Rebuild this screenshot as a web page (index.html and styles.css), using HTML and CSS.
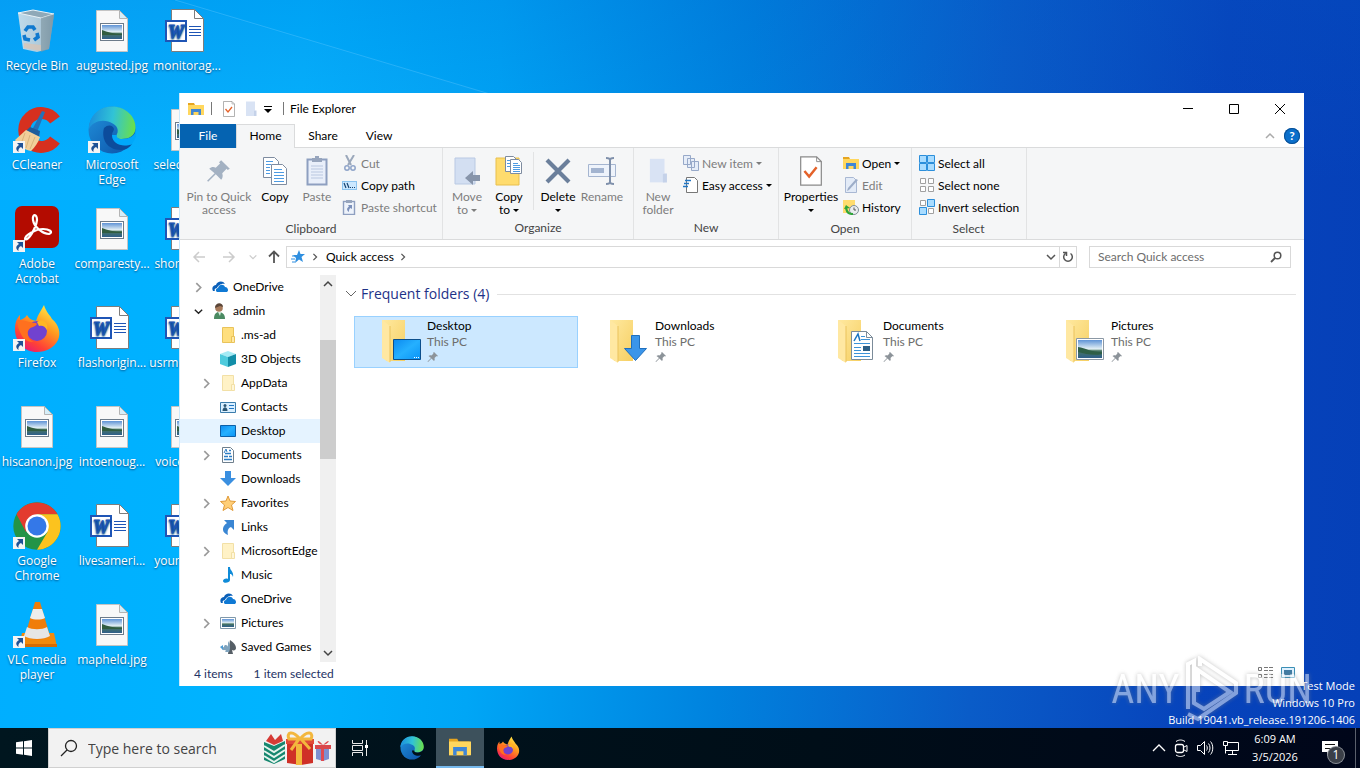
FILE: index.html
```html
<!DOCTYPE html>
<html lang="en">
<head>
<meta charset="utf-8">
<title>File Explorer</title>
<link rel="stylesheet" href="styles.css">
</head>
<body>

<!-- shared icons -->
<svg class="defs" width="0" height="0" aria-hidden="true">
  <defs>
    <linearGradient id="gSky" x1="0" y1="0" x2="0" y2="1"><stop offset="0" stop-color="#5f93d6"/><stop offset=".5" stop-color="#e4f1f5"/><stop offset=".6" stop-color="#47745f"/><stop offset="1" stop-color="#2f5f8c"/></linearGradient>
    <linearGradient id="gFolder" x1="0" y1="0" x2="1" y2="1"><stop offset="0" stop-color="#ffe9a0"/><stop offset="1" stop-color="#f6cf62"/></linearGradient>
    <linearGradient id="gEdge1" x1="0" y1=".4" x2="1" y2=".5"><stop offset="0" stop-color="#1b8fdc"/><stop offset=".5" stop-color="#31c3d6"/><stop offset="1" stop-color="#6ae04a"/></linearGradient>
    <linearGradient id="gEdge2" x1="0" y1="0" x2="1" y2="1"><stop offset="0" stop-color="#2193dd"/><stop offset="1" stop-color="#0b4fa5"/></linearGradient>
    <linearGradient id="gFox" x1=".8" y1="0" x2=".2" y2="1"><stop offset="0" stop-color="#fff04a"/><stop offset=".4" stop-color="#ff9a1f"/><stop offset=".75" stop-color="#ff4136"/><stop offset="1" stop-color="#e3157f"/></linearGradient>
    <linearGradient id="gScreen" x1="0" y1="0" x2="1" y2="1"><stop offset="0" stop-color="#0b8af0"/><stop offset=".5" stop-color="#25b0ff"/><stop offset="1" stop-color="#0a93f5"/></linearGradient>
    <linearGradient id="gBin" x1="0" y1="0" x2="1" y2="0"><stop offset="0" stop-color="#d3e1ea"/><stop offset=".6" stop-color="#c2cfd8"/><stop offset="1" stop-color="#8fa3b0"/></linearGradient>
  </defs>

  <symbol id="arrow" viewBox="0 0 12 12"><rect width="12" height="12" fill="#f4f4f4"/><path d="M4 2h6v6L8 6C6 7 5 8.500 5.500 11 2 8.500 3 5.500 6 4z" fill="#1f5296"/></symbol>
  <symbol id="jpg" viewBox="0 0 48 48"><path d="M8.500 3.500h23l8 8v33h-31z" fill="#f8f8f8" stroke="#c4c4c4"/><path d="M31.500 3.500v8h8z" fill="#d6eef8" stroke="#b4b4b4"/><rect x="12.500" y="16.500" width="23" height="17" fill="#fff" stroke="#6d7b8a"/><rect x="14" y="18" width="20" height="14" fill="url(#gSky)"/><path d="M14 23c5 2 12 4 20 4v1H14z" fill="#305c40"/></symbol>
  <symbol id="doc" viewBox="0 0 48 48"><path d="M8.500 2.500h23l9 9v33h-32z" fill="#fff" stroke="#7d7d7d"/><path d="M31.500 2.500v9h9z" fill="#fff" stroke="#7d7d7d"/><path d="M26 19.500h12M26 22.500h12M26 25.500h12M26 28.500h12" stroke="#1f55b5"/><rect x="3" y="14" width="20" height="20" fill="#fff" stroke="#1f55b5" stroke-width="2"/><text x="13" y="30.500" text-anchor="middle" font-family="Liberation Serif, serif" font-weight="bold" font-style="italic" font-size="18" fill="#1f55b5" stroke="#1f55b5">W</text></symbol>
  <symbol id="bin" viewBox="0 0 48 48"><path d="M5 6 41 8 36 42 24 45 10 42z" fill="url(#gBin)" opacity=".9"/><path d="M5 6 20 3 41 7 28 11z" fill="#8fa9b8" stroke="#e9f2f7"/><path d="M28 11 41 7 36 42 28 45z" fill="#7f949f" opacity=".6"/><path d="M11 36l17 2v6l-17-3z" fill="#ddc3b0" opacity=".7"/><g fill="none" stroke="#0f79cf" stroke-width="3.600"><path d="M12 24l3-4 5 0 2 3"/><path d="M24 26l1 4-4 3"/><path d="M17 33l-5-1-1-4"/></g></symbol>
  <symbol id="ccleaner" viewBox="0 0 48 48"><path d="M42 14A17 17 0 1 0 42 34" fill="none" stroke="#d6301f" stroke-width="12"/><path d="M29 5l3 1-8 20-5-2z" fill="#2472b8"/><path d="M17 21l10 4-1 6-14-5z" fill="#1e5d9c"/><path d="M13 24l14 7c-2 6-5 10-9 14C12 44 6 40 2 34z" fill="#f1cf9a"/><path d="M12 27 8 38M17 29l-4 13M22 31l-5 12" stroke="#d9b47c"/></symbol>
  <symbol id="edge" viewBox="0 0 48 48"><circle cx="24" cy="24" r="23.500" fill="url(#gEdge2)"/><path d="M1 19C4 6 14 .5 24 .5 38 .5 48 11 47.500 22c0 8-7 11-14 11-4 0-6-2-5-4 2-3 2-8-3-11C16 12 5 15 1 23z" fill="url(#gEdge1)"/><path d="M16 22c-3 11 3 22 17 22 5 0 9-3 11-6-9 4-20 0-20-9 0-3 2-4 2-6-1-4-6-5-10-1z" fill="#0c4c9c"/><path d="M24 29c0 9 11 13 20 9l4-7 0-8c0 7-7 10-14 10-4 0-6-2-5-4z" fill="#00a8fa"/></symbol>
  <symbol id="edgebar" viewBox="0 0 48 48"><circle cx="24" cy="24" r="23" fill="url(#gEdge2)"/><path d="M1 19C4 6 14 .5 24 .5 38 .5 48 11 47.500 22c0 8-7 11-14 11-4 0-6-2-5-4 2-3 2-8-3-11C16 12 5 15 1 23z" fill="url(#gEdge1)"/><path d="M24 29c0 9 11 13 20 9l4-7 0-8c0 7-7 10-14 10-4 0-6-2-5-4z" fill="#001019"/></symbol>
  <symbol id="acrobat" viewBox="0 0 48 48"><rect x="2" y="1" width="44" height="42" rx="7" fill="#b30b00"/><path d="M12 34c3 3 11-11 12-19 0-7-5-6-4 0 1 7 10 14 16 14 5-2 0-5-6-5-7 0-18 6-18 10z" fill="none" stroke="#fff" stroke-width="2.200"/></symbol>
  <symbol id="firefox" viewBox="0 0 48 48"><path d="M2 25C2 17 5 13 7 11v5c3-1 5-2 7-5 2 4 5 5 9 6 2-7 6-12 8-16 2 7 6 10 8 14 7 6 9 14 6 21-4 8-12 12-21 12C11 48 2 38 2 25z" fill="url(#gFox)"/><circle cx="24" cy="27" r="10" fill="#7142cf"/><path d="M5 16c8 0 12 3 18 3 2 1 0 3-3 4-4 1-6 4-5 8 0 3 3 6 6 7-7 0-11-3-13-8-2-4-4-9-3-14z" fill="#ff701f"/><path d="M24 18c6-4 12 1 10 8-2-4-5-5-8-4z" fill="#ffb622"/></symbol>
  <symbol id="chrome" viewBox="0 0 48 48"><circle cx="24" cy="24" r="23.700" fill="#239447"/><path d="M3.500 12.200A23.700 23.700 0 0 1 44.500 12.200H24L13 30z" fill="#e33b2e"/><path d="M44.500 12.200A23.700 23.700 0 0 1 24 47.700L34.500 30 24 12.200z" fill="#fcc31e"/><circle cx="24" cy="24" r="11.800" fill="#fff"/><circle cx="24" cy="24" r="9.500" fill="#3478e8"/></symbol>
  <symbol id="vlc" viewBox="0 0 48 48"><path d="M9 32h32l3 14H6z" fill="#f28a0c"/><path d="M6 43h38v3H6z" fill="#d76c03"/><path d="M22 1h5l10 34c-5 5-20 5-25 0z" fill="#f07d0a"/><path d="M20 8h9l3 9c-4 2-11 2-15 0z" fill="#ededed"/><path d="M14 26c5 3 15 3 20 0l3 9c-6 4-20 4-26 0z" fill="#e6e6e6"/></symbol>

  <symbol id="explorer" viewBox="0 0 16 16"><path d="M0 2h6l1 2h8v10H0z" fill="#e6a520"/><path d="M0 4h16v10H0z" fill="#ffd75e"/><path d="M3 8h10v6h-2.500v-3h-5v3H3z" fill="#3f86d6"/></symbol>
  <symbol id="check" viewBox="0 0 24 32"><path d="M1 1h17l5 5v25H1z" fill="#fff" stroke="#8a8a8a" stroke-width="1.300"/><path d="M18 1v5h5" fill="none" stroke="#8a8a8a"/><path d="M5 16l5 6L18 12" fill="none" stroke="#e4622a" stroke-width="2.600"/></symbol>
  <symbol id="palefolder" viewBox="0 0 24 32"><path d="M2 1h18v29H2z" fill="#d9e3f4"/><path d="M20 19h3v11h-5V20z" fill="#c5d2e9"/></symbol>
  <symbol id="pin" viewBox="0 0 24 24"><path d="M14 2l8 8-2 1-1-1-4 4c1 3 0 5-1 6l-5-5-7 7-1-1 7-7-5-4c2-2 4-2 6-1l4-4-1-1z" fill="currentColor"/></symbol>
  <symbol id="copy" viewBox="0 0 26 30"><g fill="#fff" stroke="#7e8ca0"><path d="M1.500 1.500h11l4 4v16h-15z"/><path d="M9.500 8.500h11l4 4v16h-15z"/></g><path d="M4 5.500h7M4 8.500h5M4 11.500h4M4 14.500h4M4 17.500h4M12 13.500h8M12 16.500h10M12 19.500h10M12 22.500h10M12 25.500h10" stroke="#4d9be3"/></symbol>
  <symbol id="paste" viewBox="0 0 22 30"><rect x="1.500" y="3.500" width="19" height="25" fill="#e9effa" stroke="#8e9fc0" stroke-width="2"/><path d="M6 2h3V0h4v2h3v4H6z" fill="#97a5bd"/><path d="M5 10h12M5 13h12M5 16h12M5 19h12M5 22h12" stroke="#b9c7e0"/></symbol>
  <symbol id="cut" viewBox="0 0 16 16"><path d="M4 0l5 10M12 0 6 10" stroke="#9ba8bb" stroke-width="2"/><circle cx="5" cy="13" r="2.200" fill="none" stroke="#8fa4c9" stroke-width="1.500"/><circle cx="11" cy="13" r="2.200" fill="none" stroke="#8fa4c9" stroke-width="1.500"/></symbol>
  <symbol id="path" viewBox="0 0 16 16"><rect x=".5" y="4.500" width="14" height="8" fill="#cce8ff" stroke="#8bc4f0"/><path d="M2 6l2 5M5 6l2 5M8 10.500h1M10 10.500h1M12 10.500h1" stroke="#17436f" stroke-width="1.200"/></symbol>
  <symbol id="pastesc" viewBox="0 0 16 16"><rect x="1.500" y="2.500" width="11" height="13" fill="#eef3fb" stroke="#8e9fc0" stroke-width="1.400"/><path d="M4 1h6v3H4z" fill="#97a5bd"/><path d="M6 6h4v4L8.500 9C7 10 7 11 7 13 4 11 5 9 7 7.500z" fill="#7b90bb"/></symbol>
  <symbol id="moveto" viewBox="0 0 26 30"><path d="M1 2h20v26H1z" fill="#d3dff2" stroke="#b9c9e3"/><path d="M11 22l8-7v4h7v6h-7v4z" fill="#8795ab"/></symbol>
  <symbol id="copyto" viewBox="0 0 26 30"><path d="M0 2h23v27H0z" fill="#ffdc6e" stroke="#e8bf4c"/><g fill="#fff" stroke="#7e8ca0"><path d="M9.500.5h8l3 3v12h-11z"/><path d="M14.500 3.500h8l3 3v11h-11z"/></g><path d="M11 4.500h3M11 7.500h3M11 10.500h3M17 7.500h5M17 9.500h7M17 11.500h7M17 13.500h7M17 15.500h7" stroke="#4d9be3"/></symbol>
  <symbol id="delete" viewBox="0 0 26 26"><path d="M2 2l22 22M24 2 2 24" stroke="#6b7f9b" stroke-width="4.200"/></symbol>
  <symbol id="rename" viewBox="0 0 28 28"><path d="M.500 7.500h27v12H.500z" fill="#eef3fb" stroke="#a5b5d0"/><path d="M3 11h13v5H3z" fill="#a3b4d0"/><path d="M18 1c3 0 4 1 4 2 0-1 1-2 4-2M22 2v24M18 27c3 0 4-1 4-2 0 1 1 2 4 2" fill="none" stroke="#7f90ab" stroke-width="2"/></symbol>
  <symbol id="newitem" viewBox="0 0 16 16"><g fill="#e6edf8" stroke="#97a9c9"><path d="M.500.500h7v9h-7zM4.500 3.500h7v9h-7zM8.500 6.500h7v9h-7z"/></g></symbol>
  <symbol id="easy" viewBox="0 0 16 16"><path d="M3.500.500h8l3 3v12h-11z" fill="#fff" stroke="#777"/><path d="M2 3.500h6M1 6.500h5M0 9.500h5" stroke="#2277c5" stroke-width="1.500"/></symbol>
  <symbol id="edit" viewBox="0 0 16 16"><path d="M2.500.500h8l3 3v12h-11z" fill="#e3ebf7" stroke="#a9b8d3"/><path d="M15 3 6 13l-2 1 1-3 8-9z" fill="#9dadc8"/></symbol>
  <symbol id="history" viewBox="0 0 16 16"><path d="M0 1h12v13H0z" fill="#ffdc6e"/><circle cx="11" cy="11" r="4.500" fill="#e9ecef" stroke="#7f8d97"/><path d="M11 8.500V11h2" fill="none" stroke="#555"/><path d="M3 9c1 5 3 6 7 6" fill="none" stroke="#2fa53a" stroke-width="2.200"/><path d="M1 10l2-4 4 3z" fill="#2fa53a"/></symbol>
  <symbol id="selall" viewBox="0 0 16 16"><path d="M.500.500h7v7h-7zM8.500.500h7v7h-7zM.500 8.500h7v7h-7zM8.500 8.500h7v7h-7z" fill="#a9dcff" stroke="#2c8fdb"/></symbol>
  <symbol id="selnone" viewBox="0 0 16 16"><path d="M1.500 1.500h5v5h-5zM9.500 1.500h5v5h-5zM1.500 9.500h5v5h-5zM9.500 9.500h5v5h-5z" fill="#fff" stroke="#a0a0a0"/></symbol>
  <symbol id="selinv" viewBox="0 0 16 16"><path d="M1.500 1.500h5v5h-5zM9.500 9.500h5v5h-5z" fill="#fff" stroke="#a0a0a0"/><path d="M8.500.500h7v7h-7zM.500 8.500h7v7h-7z" fill="#a9dcff" stroke="#2c8fdb"/></symbol>
  <symbol id="chev" viewBox="0 0 10 10"><path d="M3 1l4 4-4 4" fill="none" stroke="currentColor" stroke-width="1.500"/></symbol>
  <symbol id="down" viewBox="0 0 12 12"><path d="M2 4l4 4 4-4" fill="none" stroke="currentColor" stroke-width="1.500"/></symbol>
  <symbol id="back" viewBox="0 0 14 14"><path d="M7 2 2 7l5 5M2 7h11" fill="none" stroke="currentColor" stroke-width="1.500"/></symbol>
  <symbol id="star" viewBox="0 0 16 16"><path d="M9 1l1.500 4H15l-3.500 3 1.500 5-4-2.500L5 14l1-5-3-3h4z" fill="#2f8fe0"/><path d="M2 7h3M1 10h4M2 13h3" stroke="#2f8fe0"/></symbol>

  <symbol id="cloud" viewBox="0 0 16 16"><path d="M1 12C-1 8 2 6 4 6c1-4 7-5 9-1-4-1-7 2-8 4-2 0-3 2-2 3z" fill="#0a5fb8"/><path d="M5 13c-2-1-1-4 1-4 1-4 6-4 7-1 3 0 4 4 2 5z" fill="#0f79d4"/></symbol>
  <symbol id="user" viewBox="0 0 16 16"><path d="M2 16c0-5 2-7 5-7s6 2 6 7z" fill="#4b8a62"/><path d="M6 9h3l-1 4z" fill="#d8efe2"/><circle cx="7" cy="5" r="3.800" fill="#a77a5b"/><path d="M3 5c0-6 8-6 8-1L8 3z" fill="#5b4638"/></symbol>
  <symbol id="folder" viewBox="0 0 16 16"><path d="M2.500.500h11v15h-11z" fill="#ffdf7e" stroke="#e9c35a"/><path d="M11.500 9.500h3v6h-3z" fill="#ffe9a6" stroke="#e9c35a"/></symbol>
  <symbol id="folderdim" viewBox="0 0 16 16"><path d="M2.500.500h11v15h-11z" fill="#fff2c6" stroke="#f2e0a6"/><path d="M11.500 9.500h3v6h-3z" fill="#fff6d8" stroke="#f2e0a6"/></symbol>
  <symbol id="cube" viewBox="0 0 16 16"><path d="M0 3 8 0l8 3-8 3z" fill="#a5ebf5"/><path d="M0 3l8 3v10l-8-3z" fill="#4ecbdd"/><path d="M16 3 8 6v10l8-3z" fill="#128ea8"/></symbol>
  <symbol id="contact" viewBox="0 0 16 16"><path d="M.500 3.500h15v10H.500z" fill="#d9efff" stroke="#3b7dac"/><circle cx="5" cy="6.500" r="1.500" fill="#2b5673"/><path d="M2.500 12c0-5 5-5 5 0z" fill="#2b5673"/><path d="M9 6.500h5M9 9.500h5" stroke="#2277c5"/></symbol>
  <symbol id="screen" viewBox="0 0 16 16"><path d="M.500 2.500h15v11H.500z" fill="url(#gScreen)" stroke="#0b5fa8"/></symbol>
  <symbol id="docs" viewBox="0 0 16 16"><path d="M2.500.500h8l3 3v12h-11z" fill="#fff" stroke="#6e7f8d"/><path d="M9 3.500h2M5 6.500h6M4 9.500h4M9 9.500h3M4 12.500h8" stroke="#2b7cc4" stroke-width="1.500"/><path d="M4 6l2-4 1 3" fill="none" stroke="#2b7cc4"/></symbol>
  <symbol id="dl" viewBox="0 0 16 16"><path d="M5 0h6v7h5l-8 8-8-8h5z" fill="#3a8fe0"/></symbol>
  <symbol id="fav" viewBox="0 0 16 16"><path d="M8 1l2 5 5.500.500-4 3.500 1.500 5.500L8 12.500 3 15.500 4.500 10 .500 6.500 6 6z" fill="#ffcf78" stroke="#e09a3a"/></symbol>
  <symbol id="link" viewBox="0 0 16 16"><path d="M4 1h10v10l-3-3c-3 1-4 4-3 8-6-2-7-8-1-12z" fill="#3a86d3"/></symbol>
  <symbol id="music" viewBox="0 0 16 16"><path d="M8 0h2c0 4 4 4 3 10-1-3-2-3-3-3v6c0 3-7 4-7 1 0-2 3-3 5-2z" fill="#0f8bd8"/></symbol>
  <symbol id="pics" viewBox="0 0 16 16"><path d="M.500 2.500h15v11H.500z" fill="#fff" stroke="#7f98aa"/><path d="M2 4h12v8H2z" fill="url(#gSky)"/></symbol>
  <symbol id="games" viewBox="0 0 16 16"><path d="M10 1c4 3 6 5 6 8 0 2-2 3-4 2l1 4H8z" fill="#555e66"/><path d="M8 2c2 3 3 7 1 11H5c1-1 1-2 0-2-3 1-4-3-1-3 0-3 4-2 4 0z" fill="#7fa3bd"/><path d="M0 8l3-2v5z" fill="#4f9bd3"/></symbol>
  <symbol id="bigfolder" viewBox="0 0 48 48"><path d="M6 2h23v41H10z" fill="url(#gFolder)"/><path d="M6 2l8 6v37l-8-5z" fill="#ffe8a2"/><path d="M14 8v36" stroke="#eac35d"/></symbol>
</svg>

<div class="desktop">
  <svg class="beams" viewBox="0 0 1360 728" preserveAspectRatio="none" aria-hidden="true">
    <path d="M170 0 500 97 700 200H0V0z" fill="#fff" opacity=".02"/>
    <path d="M175 0 500 97" stroke="#7fd0ff" opacity=".3"/>
  </svg>

  <div class="icons">
    <a class="item" href="#"><svg><use href="#bin"/></svg><span>Recycle Bin</span></a>
    <a class="item" href="#"><svg><use href="#ccleaner"/></svg><svg class="sc"><use href="#arrow"/></svg><span>CCleaner</span></a>
    <a class="item" href="#"><svg><use href="#acrobat"/></svg><svg class="sc"><use href="#arrow"/></svg><span>Adobe Acrobat</span></a>
    <a class="item" href="#"><svg><use href="#firefox"/></svg><svg class="sc"><use href="#arrow"/></svg><span>Firefox</span></a>
    <a class="item" href="#"><svg><use href="#jpg"/></svg><span>hiscanon.jpg</span></a>
    <a class="item" href="#"><svg><use href="#chrome"/></svg><svg class="sc"><use href="#arrow"/></svg><span>Google Chrome</span></a>
    <a class="item" href="#"><svg><use href="#vlc"/></svg><svg class="sc"><use href="#arrow"/></svg><span>VLC media player</span></a>

    <a class="item" href="#"><svg><use href="#jpg"/></svg><span>augusted.jpg</span></a>
    <a class="item" href="#"><svg><use href="#edge"/></svg><svg class="sc"><use href="#arrow"/></svg><span>Microsoft Edge</span></a>
    <a class="item" href="#"><svg><use href="#jpg"/></svg><span>comparesty...</span></a>
    <a class="item" href="#"><svg><use href="#doc"/></svg><span>flashorigin...</span></a>
    <a class="item" href="#"><svg><use href="#jpg"/></svg><span>intoenoug...</span></a>
    <a class="item" href="#"><svg><use href="#doc"/></svg><span>livesameri...</span></a>
    <a class="item" href="#"><svg><use href="#jpg"/></svg><span>mapheld.jpg</span></a>

    <a class="item" href="#"><svg><use href="#doc"/></svg><span>monitorag...</span></a>
    <a class="item" href="#"><svg><use href="#jpg"/></svg><span>selectedm...</span></a>
    <a class="item" href="#"><svg><use href="#doc"/></svg><span>shortinter...</span></a>
    <a class="item" href="#"><svg><use href="#doc"/></svg><span>usrmember...</span></a>
    <a class="item" href="#"><svg><use href="#jpg"/></svg><span>voicend.jpg</span></a>
    <a class="item" href="#"><svg><use href="#doc"/></svg><span>yourselfm...</span></a>
  </div>

  <div class="build">
    <p>Test Mode</p>
    <p>Windows 10 Pro</p>
    <p>Build 19041.vb_release.191206-1406</p>
  </div>

  <div class="window">
    <div class="titlebar">
      <svg class="i16"><use href="#explorer"/></svg>
      <i class="bar"></i>
      <button class="quick" aria-label="Properties"><svg class="i16"><use href="#check"/></svg></button>
      <button class="quick" aria-label="New folder"><svg class="i16"><use href="#palefolder"/></svg></button>
      <button class="more" aria-label="Customize"><svg width="8" height="8" viewBox="0 0 8 8"><path d="M0 1.500h8" stroke="#000"/><path d="M0 4h8L4 8z"/></svg></button>
      <i class="bar"></i>
      <span class="title">File Explorer</span>
      <button class="win" aria-label="Minimize"><svg width="10" height="10"><path d="M0 4.500h10" stroke="#000"/></svg></button>
      <button class="win" aria-label="Maximize"><svg width="10" height="10"><path d="M.5.5h9v9h-9z" fill="none" stroke="#000"/></svg></button>
      <button class="win" aria-label="Close"><svg width="10" height="10"><path d="M0 0l10 10M10 0 0 10" stroke="#000"/></svg></button>
    </div>

    <div class="tabs">
      <button class="tab file">File</button>
      <button class="tab active">Home</button>
      <button class="tab">Share</button>
      <button class="tab">View</button>
      <button class="collapse" aria-label="Collapse ribbon"><svg width="10" height="10" viewBox="0 0 10 10"><path d="M1 7l4-4 4 4" fill="none" stroke="#aaa" stroke-width="1.500"/></svg></button>
      <button class="help" aria-label="Help">?</button>
    </div>

    <div class="ribbon">
      <div class="group clip">
        <div class="tools">
          <button class="big wide off"><svg class="p26"><use href="#pin"/></svg><span>Pin to Quick access</span></button>
          <button class="big"><svg><use href="#copy"/></svg><span>Copy</span></button>
          <button class="big off"><svg><use href="#paste"/></svg><span>Paste</span></button>
          <div class="stack">
            <button class="small off"><svg class="i16"><use href="#cut"/></svg>Cut</button>
            <button class="small"><svg class="i16"><use href="#path"/></svg>Copy path</button>
            <button class="small off"><svg class="i16"><use href="#pastesc"/></svg>Paste shortcut</button>
          </div>
        </div>
        <div class="caption">Clipboard</div>
      </div>
      <div class="group organize">
        <div class="tools">
          <button class="big off"><svg><use href="#moveto"/></svg><span>Move<br>to <i class="tri"></i></span></button>
          <button class="big"><svg><use href="#copyto"/></svg><span>Copy<br>to <i class="tri"></i></span></button>
          <i class="rule"></i>
          <button class="big"><svg class="p26"><use href="#delete"/></svg><span>Delete<br><i class="tri"></i></span></button>
          <button class="big mid off"><svg><use href="#rename"/></svg><span>Rename</span></button>
        </div>
        <div class="caption">Organize</div>
      </div>
      <div class="group new">
        <div class="tools">
          <button class="big off"><svg class="p26"><use href="#palefolder"/></svg><span>New<br>folder</span></button>
          <div class="stack">
            <button class="small off"><svg class="i16"><use href="#newitem"/></svg>New item <i class="tri"></i></button>
            <button class="small"><svg class="i16"><use href="#easy"/></svg>Easy access <i class="tri"></i></button>
          </div>
        </div>
        <div class="caption">New</div>
      </div>
      <div class="group open">
        <div class="tools">
          <button class="big props"><svg><use href="#check"/></svg><span>Properties<br><i class="tri"></i></span></button>
          <div class="stack">
            <button class="small"><svg class="i16"><use href="#explorer"/></svg>Open <i class="tri"></i></button>
            <button class="small off"><svg class="i16"><use href="#edit"/></svg>Edit</button>
            <button class="small"><svg class="i16"><use href="#history"/></svg>History</button>
          </div>
        </div>
        <div class="caption">Open</div>
      </div>
      <div class="group select">
        <div class="tools">
          <div class="stack">
            <button class="small"><svg class="i16"><use href="#selall"/></svg>Select all</button>
            <button class="small"><svg class="i16"><use href="#selnone"/></svg>Select none</button>
            <button class="small"><svg class="i16"><use href="#selinv"/></svg>Invert selection</button>
          </div>
        </div>
        <div class="caption">Select</div>
      </div>
    </div>

    <div class="nav">
      <button class="go dim" aria-label="Back"><svg width="14" height="14"><use href="#back"/></svg></button>
      <button class="go dim flip" aria-label="Forward"><svg width="14" height="14"><use href="#back"/></svg></button>
      <button class="go narrow dim" aria-label="Recent"><svg width="10" height="10"><use href="#down"/></svg></button>
      <button class="go up" aria-label="Up"><svg width="14" height="14" viewBox="0 0 14 14"><path d="M2 6.500l5-5 5 5M7 2v11" fill="none" stroke="#555" stroke-width="1.800"/></svg></button>
      <div class="address">
        <svg class="i16"><use href="#star"/></svg>
        <svg class="crumb"><use href="#chev"/></svg>
        <a href="#">Quick access</a>
        <svg class="crumb"><use href="#chev"/></svg>
        <button class="drop" aria-label="Previous locations"><svg width="12" height="12"><use href="#down"/></svg></button>
        <button class="reload" aria-label="Refresh"><svg width="12" height="12" viewBox="0 0 12 12"><path d="M8.500 2.500A4.300 4.300 0 1 1 3.500 2.500M1 1.500h3.500V5" fill="none" stroke="#555" stroke-width="1.500"/></svg></button>
      </div>
      <div class="search">
        <input type="text" placeholder="Search Quick access" aria-label="Search Quick access">
        <svg width="12" height="12" viewBox="0 0 12 12"><circle cx="7.500" cy="4.500" r="3.300" fill="none" stroke="#555" stroke-width="1.500"/><path d="M5 7 1 11" stroke="#555" stroke-width="1.800"/></svg>
      </div>
    </div>

    <div class="content">
      <div class="tree">
        <a class="row top" href="#"><svg class="tw"><use href="#chev"/></svg><svg class="i16"><use href="#cloud"/></svg><span>OneDrive</span></a>
        <a class="row top" href="#"><svg class="tw dark"><use href="#down"/></svg><svg class="i16"><use href="#user"/></svg><span>admin</span></a>
        <a class="row" href="#"><i class="tw"></i><svg class="i16"><use href="#folder"/></svg><span>.ms-ad</span></a>
        <a class="row" href="#"><i class="tw"></i><svg class="i16"><use href="#cube"/></svg><span>3D Objects</span></a>
        <a class="row" href="#"><svg class="tw"><use href="#chev"/></svg><svg class="i16"><use href="#folderdim"/></svg><span>AppData</span></a>
        <a class="row" href="#"><i class="tw"></i><svg class="i16"><use href="#contact"/></svg><span>Contacts</span></a>
        <a class="row on" href="#"><i class="tw"></i><svg class="i16"><use href="#screen"/></svg><span>Desktop</span></a>
        <a class="row" href="#"><svg class="tw"><use href="#chev"/></svg><svg class="i16"><use href="#docs"/></svg><span>Documents</span></a>
        <a class="row" href="#"><i class="tw"></i><svg class="i16"><use href="#dl"/></svg><span>Downloads</span></a>
        <a class="row" href="#"><svg class="tw"><use href="#chev"/></svg><svg class="i16"><use href="#fav"/></svg><span>Favorites</span></a>
        <a class="row" href="#"><i class="tw"></i><svg class="i16"><use href="#link"/></svg><span>Links</span></a>
        <a class="row" href="#"><svg class="tw"><use href="#chev"/></svg><svg class="i16"><use href="#folderdim"/></svg><span>MicrosoftEdge</span></a>
        <a class="row" href="#"><i class="tw"></i><svg class="i16"><use href="#music"/></svg><span>Music</span></a>
        <a class="row" href="#"><i class="tw"></i><svg class="i16"><use href="#cloud"/></svg><span>OneDrive</span></a>
        <a class="row" href="#"><svg class="tw"><use href="#chev"/></svg><svg class="i16"><use href="#pics"/></svg><span>Pictures</span></a>
        <a class="row" href="#"><i class="tw"></i><svg class="i16"><use href="#games"/></svg><span>Saved Games</span></a>
      </div>
      <div class="scroll">
        <svg class="up" width="12" height="12"><use href="#down"/></svg>
        <i class="thumb"></i>
        <svg width="12" height="12"><use href="#down"/></svg>
      </div>
      <div class="main">
        <h2><svg width="12" height="12" viewBox="0 0 12 12"><path d="M1 3l5 5 5-5" fill="none" stroke="#666"/></svg>Frequent folders (4)<i></i></h2>
        <div class="tiles">
          <a class="tile on" href="#"><svg viewBox="0 0 48 48"><use href="#bigfolder"/><path d="M17.500 21.500h27v20h-27z" fill="url(#gScreen)" stroke="#0b4f8c"/><path d="M38 39.500h6" stroke="#fff" stroke-dasharray="1 1"/></svg>
            <div><b>Desktop</b><span>This PC</span><svg class="pinned"><use href="#pin"/></svg></div></a>
          <a class="tile" href="#"><svg viewBox="0 0 48 48"><use href="#bigfolder"/><path d="M27.500 17.500h8v13h7l-11 12-11-12h7z" fill="#3a95ea" stroke="#1f6fbd"/></svg>
            <div><b>Downloads</b><span>This PC</span><svg class="pinned"><use href="#pin"/></svg></div></a>
          <a class="tile" href="#"><svg viewBox="0 0 48 48"><use href="#bigfolder"/><path d="M19.500 13.500h15l6 6v22h-21z" fill="#fff" stroke="#7b8b99"/><path d="M34.500 13.500v6h6" fill="none" stroke="#7b8b99"/><path d="M29 18.500h4M29 21.500h9M22 25.500h16M22 29.500h7M22 32.500h7M22 35.500h16M22 38.500h16" stroke="#3d93d8"/><path d="M22 23l4-7 2 7" fill="none" stroke="#1d76c2" stroke-width="1.500"/><path d="M31 28h7v5h-7z" fill="#2d5f86"/></svg>
            <div><b>Documents</b><span>This PC</span><svg class="pinned"><use href="#pin"/></svg></div></a>
          <a class="tile" href="#"><svg viewBox="0 0 48 48"><use href="#bigfolder"/><path d="M16.500 20.500h27v21h-27z" fill="#fff" stroke="#8b98a5"/><path d="M18 22h24v18H18z" fill="url(#gSky)"/><path d="M18 29c8 1 12 5 24 5v2c-8 2-16 0-24-2z" fill="#2f5f47"/></svg>
            <div><b>Pictures</b><span>This PC</span><svg class="pinned"><use href="#pin"/></svg></div></a>
        </div>
      </div>
    </div>

    <div class="status">
      <span>4 items</span><span>1 item selected</span>
      <svg class="views" width="40" height="14" viewBox="0 0 40 14"><path d="M2.500 1.500h3v3h-3zM2.500 8.500h3v3h-3z" fill="none" stroke="#777"/><path d="M8 1.500h4M13 1.500h4M8 4.500h4M13 4.500h4M8 8.500h4M13 8.500h4M8 11.500h4M13 11.500h4" stroke="#777"/><path d="M25.500 1.500h13v10h-13z" fill="#dff1ff" stroke="#3b8fb5"/><path d="M28 4h8v5h-8z" fill="#3f7ba3"/></svg>
    </div>
  </div>

  <div class="watermark">
    <span>ANY</span>
    <svg width="54" height="68" viewBox="5 0 54 68"><path d="M8 53V8l6-3v42l10 6 26-17L18 14v22M20 10V3l36 24v10L18 63 8 58" fill="none" stroke="currentColor" stroke-width="4"/></svg>
    <span>RUN</span>
  </div>
</div>

<div class="taskbar">
  <button class="app" aria-label="Start"><svg width="16" height="16"><path d="M0 2.300 7 1.300v6.200H0zM8 1.200 16 0v7.500H8zM0 8.500h7v6.200L0 13.700zM8 8.500h8V16l-8-1.200z" fill="#fff"/></svg></button>
  <div class="find">
    <svg width="18" height="18" viewBox="0 0 18 18"><circle cx="11" cy="7" r="5.500" fill="none" stroke="#222" stroke-width="1.300"/><path d="M7 11 1 17" stroke="#222" stroke-width="1.300"/></svg>
    <input type="text" placeholder="Type here to search" aria-label="Type here to search">
    <svg width="70" height="34" viewBox="0 0 70 34">
      <path d="M2 11l10 4 11-5v18l-11 5-10-4z" fill="#16876f"/><path d="M2 15l10 6 11-7M2 20l10 6 11-7M2 25l10 6 11-7" fill="none" stroke="#e6f4ee" stroke-width="2"/><path d="M4 10l5-7 4 6 6-6 2 7-9 4z" fill="#d63b36"/>
      <path d="M25 10h26v22l-12 2-14-2z" fill="#cf3027"/><path d="M34 10h6v24h-6z" fill="#f3b73d"/><path d="M24 8h28v5H24z" fill="#e04a38"/><path d="M38 8C30-2 24 2 27 8zM38 8c8-10 14-6 11 0zM37 8l-8 11M39 8l9 10" fill="none" stroke="#f3b73d" stroke-width="3"/>
      <path d="M54 16h13v12l-6 2-7-2z" fill="#7d8fd0"/><path d="M59 16h3v14h-3z" fill="#e04a50"/><path d="M53 14h16v4H53z" fill="#d9474c"/><path d="M61 14c-6-8-8-2 0 0 7-8 8-2 0 0z" fill="#e04a50"/>
    </svg>
  </div>
  <button class="app" aria-label="Task view"><svg width="18" height="16" viewBox="0 0 18 16"><path d="M1.500 0v3.500h10V0M1.500 16v-3.500h10V16M1.500 5.500h10v5h-10zM15.500 0v16" fill="none" stroke="#e8e8e8"/><path d="M14 5h3v3h-3z" fill="#fff"/></svg></button>
  <button class="app gap" aria-label="Microsoft Edge"><svg width="24" height="24"><use href="#edgebar"/></svg></button>
  <button class="app current" aria-label="File Explorer"><svg width="22" height="22"><use href="#explorer"/></svg></button>
  <button class="app" aria-label="Firefox"><svg width="24" height="24"><use href="#firefox"/></svg></button>
  <div class="tray">
    <svg width="14" height="14" viewBox="0 0 14 14"><path d="M1 10l6-6 6 6" fill="none" stroke="#fff" stroke-width="1.300"/></svg>
    <svg width="14" height="18" viewBox="0 0 14 18"><rect x="1.500" y="5.500" width="8" height="8" rx="2" fill="none" stroke="#fff" stroke-width="1.300"/><path d="M10 8l3-1.500v6L10 11M2 2.500c3-2 6-2 9 0M2 16c3 2 6 2 9 0" fill="none" stroke="#fff"/></svg>
    <svg width="18" height="16" viewBox="0 0 18 16"><path d="M1.500 5.500h3l4-4v13l-4-4h-3zM10.500 5.500c1 1 1 4 0 5M12.500 3.500c2 2 2 7 0 9M14.500 1.500c3 3 3 10 0 13" fill="none" stroke="#fff"/></svg>
    <svg width="18" height="16" viewBox="0 0 18 16"><path d="M5.500 2.500h11v8h-13M10.500 10.500v4M6 14.500h9M1.500 1.500h4v4h-4zM3.500 5.500v8" fill="none" stroke="#fff"/></svg>
  </div>
  <div class="clock"><span>6:09 AM</span><span>3/5/2026</span></div>
  <button class="notes" aria-label="Notifications"><svg width="18" height="18" viewBox="0 0 18 18"><path d="M1 2h16v11h-7l-4 4v-4H1z" fill="#fff"/><path d="M4 5.500h10M4 9.500h8" stroke="#111"/></svg><span>1</span></button>
  <i class="peek"></i>
</div>

</body>
</html>
```
FILE: styles.css
```css
*{
  box-sizing: border-box;
}
body{
  margin: 0;
  height: 100vh;
  display: flex;
  flex-direction: column;
  overflow: hidden;
  font-family: "Open Sans", "Noto Sans", sans-serif;
  font-size: 12px;
  color: #000;
}
button{
  font: inherit;
  color: inherit;
  background: none;
  border: 0;
  padding: 0;
}
a{
  color: inherit;
  text-decoration: none;
}
svg{
  flex: none;
  display: block;
}
.defs{
  position: absolute;
}
.i16{
  width: 16px;
  height: 16px;
}

/* desktop */
.desktop{
  flex: 1;
  min-height: 0;
  position: relative;
  background: linear-gradient(180deg, rgba(0, 90, 200, .2), transparent 25%), linear-gradient(93deg, #00aeff 0%, #00b4ff 22%, #00a6f6 36%, #0082de 54%, #0a5cc8 72%, #0743bb 88%, #0540b8 100%);
}
.beams{
  position: absolute;
  width: 100%;
  height: 100%;
}
.icons{
  position: relative;
  display: grid;
  grid-auto-flow: column;
  grid-template-rows: repeat(7, 99px);
  grid-auto-columns: 75px;
}
.item{
  position: relative;
  display: flex;
  flex-direction: column;
  align-items: center;
  padding: 7px 1px 0 0;
  color: #fff;
  line-height: 15px;
  text-align: center;
  text-shadow: 0 1px 2px #004a80;
}
.item svg{
  width: 48px;
  height: 48px;
  margin-bottom: 3px;
}
.item .sc{
  position: absolute;
  left: 13px;
  top: 42px;
  width: 12px;
  height: 12px;
}
.build{
  position: absolute;
  right: 5px;
  bottom: 0;
  color: #fff;
  font-size: 11px;
  text-align: right;
}
.build p{
  margin: 0;
  line-height: 17px;
}

/* explorer window */
.window{
  position: absolute;
  left: 179px;
  right: 56px;
  top: 93px;
  bottom: 42px;
  display: flex;
  flex-direction: column;
  background: #fff;
  border-left: 1px solid #cde9fb;
  font-family: Lato, "Open Sans", sans-serif;
}
.titlebar{
  display: flex;
  align-items: center;
  height: 31px;
  padding: 0 1px 0 8px;
}
.bar{
  width: 1px;
  height: 13px;
  margin: 0 6px 0 7px;
  background: #777;
}
.quick{
  width: 22px;
}
.quick svg{
  margin: 0 auto;
}
.more{
  margin: 0 0 0 2px;
  width: 12px;
}
.title{
  flex: 1;
}
.win{
  width: 46px;
  height: 31px;
}
.win svg{
  margin: 0 auto;
}
.tabs{
  display: flex;
  align-items: center;
  height: 24px;
  border-bottom: 1px solid #dadbdc;
}
.tab{
  width: 56px;
  height: 24px;
}
.tab.file{
  background: #0563b1;
  color: #fff;
}
.tab.active{
  width: 59px;
  background: #f5f6f7;
  border: 1px solid #dadbdc;
  border-bottom: 0;
  padding-bottom: 2px;
}
.collapse{
  margin-left: auto;
}
.help{
  width: 16px;
  height: 16px;
  margin: 0 4px 0 9px;
  border-radius: 50%;
  background: #0b6fcb;
  box-shadow: inset 0 0 0 1px #0a4f94;
  color: #fff;
  font-weight: bold;
  line-height: 16px;
}
.ribbon{
  display: flex;
  height: 92px;
  background: #f5f6f7;
  border-bottom: 1px solid #dadbdc;
}
.group{
  display: flex;
  flex-direction: column;
  width: 263px;
  padding: 4px 4px 0;
  border-right: 1px solid #e2e3e4;
}
.group.organize{
  width: 191px;
  padding: 4px 3px 0;
}
.group.new{
  width: 145px;
  padding: 4px 3px 0;
}
.group.open{
  width: 133px;
}
.group.select{
  width: 115px;
  padding-left: 3px;
}
.tools{
  display: flex;
  height: 68px;
}
.caption{
  line-height: 22px;
  text-align: center;
  color: #444;
}
.big{
  display: flex;
  flex-direction: column;
  align-items: center;
  width: 42px;
  line-height: 13px;
}
.big svg{
  width: 28px;
  height: 30px;
  margin: 4px 0;
}
.big .p26{
  height: 26px;
  margin: 6px 0;
}
.big.wide{
  width: 70px;
}
.big.mid{
  width: 46px;
}
.big.props{
  width: 56px;
}
.off{
  color: #7d7d7d;
}
.big.wide svg{
  color: #a3b1c2;
}
.rule{
  width: 1px;
  height: 58px;
  margin: 0 3px;
  background: #e2e3e4;
}
.stack{
  padding-left: 4px;
}
.small{
  display: flex;
  align-items: center;
  gap: 3px;
  height: 22px;
  white-space: nowrap;
}
.tri{
  display: inline-block;
  vertical-align: middle;
  border: 3px solid transparent;
  border-top-color: currentColor;
  border-bottom: 0;
}
.nav{
  display: flex;
  align-items: center;
  height: 35px;
  padding: 0 13px 1px 4px;
}
.go{
  width: 30px;
  color: #555;
}
.go svg{
  margin: 0 auto;
}
.go.narrow{
  width: 18px;
}
.go.up{
  width: 24px;
}
.go.dim{
  color: #ccc;
}
.flip svg{
  transform: scaleX(-1);
}
.address{
  flex: 1;
  display: flex;
  align-items: center;
  height: 22px;
  padding-left: 3px;
  border: 1px solid #d9d9d9;
}
.address a{
  padding-bottom: 2px;
}
.crumb{
  width: 8px;
  height: 8px;
  margin: 0 7px 0 5px;
  color: #555;
}
.drop{
  margin-left: auto;
  padding: 0 2px;
  color: #555;
}
.reload{
  height: 20px;
  padding: 0 2px;
  border-left: 1px solid #d9d9d9;
}
.search{
  display: flex;
  align-items: center;
  width: 202px;
  height: 22px;
  margin-left: 12px;
  padding: 0 8px;
  border: 1px solid #d9d9d9;
}
.search input{
  flex: 1;
  min-width: 0;
  padding: 0 0 2px;
  border: 0;
  outline: 0;
  font: inherit;
}
.search input::placeholder{
  color: #6d6d6d;
}
.content{
  flex: 1;
  min-height: 0;
  display: flex;
}
.tree{
  width: 140px;
  overflow: hidden;
}
.row{
  display: flex;
  align-items: center;
  height: 24px;
  padding-left: 21px;
  white-space: nowrap;
}
.row span{
  padding-bottom: 2px;
}
.row.top{
  padding-left: 13px;
}
.row.on{
  background: #e5f3ff;
}
.tw{
  width: 11px;
  height: 11px;
  margin-right: 8px;
  color: #999;
}
.tw.dark{
  color: #222;
}
.row .i16{
  margin-right: 5px;
}
.scroll{
  display: flex;
  flex-direction: column;
  align-items: center;
  width: 16px;
  padding: 3px 0;
  background: #f0f0f0;
  color: #444;
}
.scroll .up{
  transform: rotate(180deg);
}
.thumb{
  width: 16px;
  height: 119px;
  margin: 50px 0 auto;
  background: #cdcdcd;
}
.main{
  flex: 1;
  padding: 8px 8px 0 9px;
}
.main h2{
  display: flex;
  align-items: center;
  gap: 4px;
  margin: 0;
  font-family: "Open Sans", sans-serif;
  font-size: 14px;
  font-weight: normal;
  line-height: 22px;
  color: #1e3287;
}
.main h2 i{
  flex: 1;
  height: 1px;
  margin-left: 4px;
  background: #e2e2e2;
}
.tiles{
  display: flex;
  flex-wrap: wrap;
  gap: 4px;
  padding: 11px 0 0 9px;
}
.tile{
  display: flex;
  gap: 3px;
  width: 224px;
  padding: 1px 0 1px 21px;
  border: 1px solid transparent;
  line-height: 16px;
}
.tile.on{
  background: #cce8ff;
  border-color: #99d1ff;
}
.tile > svg{
  width: 48px;
  height: 48px;
}
.tile b{
  display: block;
  font-weight: normal;
}
.tile span{
  color: #6d6d6d;
}
.pinned{
  width: 12px;
  height: 12px;
  margin-top: 1px;
  color: #8c9399;
}
.status{
  display: flex;
  align-items: center;
  gap: 21px;
  height: 24px;
  padding: 0 8px 2px 14px;
  color: #1e3264;
}
.views{
  margin-left: auto;
}
.watermark{
  position: absolute;
  right: 48px;
  bottom: 4px;
  display: flex;
  align-items: center;
  gap: 5px;
  color: #fff;
  opacity: .5;
  font: 40px/68px "Liberation Sans Narrow", "Roboto Condensed", sans-serif;
  filter: drop-shadow(0 0 2px #888);
}

/* taskbar */
.taskbar{
  display: flex;
  align-items: center;
  height: 40px;
  background: linear-gradient(90deg, #00161f, #000e18 60%, #00061a);
}
.app{
  width: 48px;
  height: 40px;
}
.app svg{
  margin: 0 auto;
}
.app.gap{
  margin-left: 4px;
}
.app.current{
  background: #3d515c;
  border-bottom: 2px solid #76b9ed;
}
.find{
  display: flex;
  align-items: center;
  width: 288px;
  height: 40px;
  padding: 0 3px 0 11px;
  background: #f2f2f2;
  border: 1px solid #d0d0d0;
}
.find input{
  flex: 1;
  min-width: 0;
  padding: 0 0 0 10px;
  border: 0;
  outline: 0;
  background: none;
  font: inherit;
  font-size: 14px;
}
.find input::placeholder{
  color: #444;
}
.tray{
  display: flex;
  align-items: center;
  gap: 8px;
  margin-left: auto;
}
.clock{
  display: flex;
  flex-direction: column;
  width: 70px;
  color: #fff;
  font-size: 11px;
  line-height: 18px;
  text-align: center;
}
.notes{
  position: relative;
  width: 45px;
  height: 40px;
  padding-right: 6px;
}
.notes svg{
  margin: 0 auto;
}
.notes span{
  position: absolute;
  left: 18px;
  top: 19px;
  width: 16px;
  height: 16px;
  border-radius: 50%;
  background: #3a3f48;
  box-shadow: 0 0 0 1px #8a8f96;
  color: #fff;
  line-height: 16px;
}
.peek{
  width: 1px;
  height: 40px;
  margin-right: 4px;
  background: #5a606c;
}
```
